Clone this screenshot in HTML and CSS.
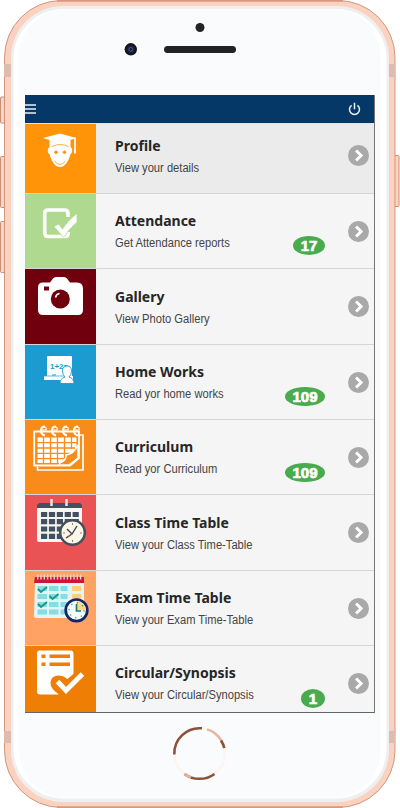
FILE: index.html
```
<!DOCTYPE html>
<html lang="en">
<head>
<meta charset="utf-8">
<title>School menu</title>
<link rel="stylesheet" href="styles.css">
</head>
<body>
<div class="device">
  <svg class="frame" viewBox="0 0 400 808" aria-hidden="true">
    <g fill="#fbd3c1" stroke="#c9917b">
      <rect x=".5" y="97" width="6" height="26" rx="1"/>
      <rect x=".5" y="156.500" width="6" height="51" rx="1"/>
      <rect x=".5" y="221.500" width="6" height="51" rx="1"/>
      <rect x="393" y="155.500" width="6" height="51" rx="1"/>
    </g>
    <rect x="4.500" y=".5" width="390.500" height="807" rx="57" fill="#fbd2c0" stroke="#cf967e"/>
    <path d="M57 .7H343M57 807.300H343" stroke="#d69a82" stroke-width="2"/>
    <path d="M4 64h8v13H4zM388 64h7v13h-7zM4 731h8v12H4zM388 731h7v12h-7z" fill="#dfbcae"/>
    <rect x="11" y="6" width="378" height="796" rx="52" fill="#eeeff0"/>
    <rect x="13.500" y="9" width="373" height="789.500" rx="50" fill="#fff"/>
    <rect x="19" y="9.500" width="361.500" height="788" rx="47" fill="#fafbfd"/>
    <circle cx="200" cy="27.500" r="4.500" fill="#222325"/>
    <rect x="164" y="46" width="72" height="7" rx="3.500" fill="#222325"/>
    <circle cx="130.800" cy="49.300" r="6.200" fill="#15151b"/>
    <circle cx="130.800" cy="49.300" r="3.600" fill="#172457"/>
    <circle cx="130.800" cy="49.300" r="1.800" fill="#15151b" stroke="#7280b0" stroke-width=".6"/>
    <g fill="none" stroke-width="2.500">
      <circle cx="199.500" cy="753.500" r="25.300" stroke="#fcf5f0"/>
      <path d="M174.300 754.500A25.300 25.300 0 0 1 202 728.300" stroke="#8b513b"/>
      <path d="M207 729.400A25.300 25.300 0 0 1 224.300 748" stroke="#e8b49f"/>
      <path d="M221 740.500A25.300 25.300 0 0 1 224.300 748" stroke="#8b513b"/>
      <path d="M184.500 773.900A25.300 25.300 0 0 0 214.500 773.900" stroke="#8b513b"/>
      <path d="M184.500 773.900A25.300 25.300 0 0 0 191 777.400" stroke="#e5af9a"/>
    </g>
  </svg>
  <main class="screen">
    <header class="bar">
      <svg width="11" height="12" viewBox="0 0 11 12"><path d="M0 2h11M0 6h11M0 10h11" stroke="#e9eff5" stroke-width="1.700"/></svg>
      <svg width="13" height="14" viewBox="0 0 13 14" fill="none" stroke="#e9eff5" stroke-width="1.500"><path d="M3.600 3.400a5 5 0 1 0 5.800 0M6.500.7v6.500"/></svg>
    </header>
    <ul class="menu">
      <li class="row first">
        <div class="tile orange"><svg viewBox="0 0 71 75">
          <path fill="#fff" d="M18 19L35 14.500L51 19L45.500 21V28Q35 24 24.500 28V21ZM24.500 28Q35 23.500 45.500 28C48 30 47.500 34 45.300 35.500C44 41.500 40 48 35 48S26 41.500 24.700 35.500C22.500 34 22 30 24.500 28Z"/>
          <circle cx="31" cy="33.300" r="1.700" fill="#ff9409"/><circle cx="39.500" cy="33.300" r="1.700" fill="#ff9409"/>
          <path d="M27 27.500Q35 23.500 43.500 27.500M29.500 42Q35 49 40.500 42" fill="none" stroke="#ffae45"/>
          <path d="M50 18.500v16" stroke="#fff" stroke-width="1.700"/>
        </svg></div>
        <div class="text"><h2>Profile</h2><p>View your details</p></div>
        <span class="arrow"><svg viewBox="0 0 20 20"><path d="M7.700 5.200l4.800 4.800-4.800 4.800"/></svg></span>
      </li>
      <li class="row">
        <div class="tile green"><svg viewBox="0 0 71 75">
          <path d="M43.300 38V39Q43.300 42.500 40 42.500H23Q19.700 42.500 19.700 39V19.500Q19.700 16 23 16H39.500Q43 16 43 19.500V23" fill="none" stroke="#fff" stroke-width="3.600"/>
          <path d="M29 32.500l4.500-2.500 4 5.200Q43 26 52 19.500V28Q43 36 38.500 43.500Z" fill="#fff" stroke="#afd98f" stroke-width=".7"/>
        </svg></div>
        <div class="text"><h2>Attendance</h2><p>Get Attendance reports</p></div>
        <span class="badge two">17</span>
        <span class="arrow"><svg viewBox="0 0 20 20"><path d="M7.700 5.200l4.800 4.800-4.800 4.800"/></svg></span>
      </li>
      <li class="row">
        <div class="tile maroon"><svg viewBox="0 0 71 75">
          <path d="M18 13.500h7l3-4Q29 8 31 8h8q2 0 3 1.500l3 4h7q6 0 6 6V41q0 5-5 5H18q-5 0-5-5V18.500q0-5 5-5Z" fill="#fff"/>
          <circle cx="35.300" cy="30" r="9.500" fill="#71000f"/><path d="M19 17.500h5v4h-5z" fill="#71000f"/><path d="M30.500 28.500a5 5 0 0 1 4-4" fill="none" stroke="#fff" stroke-width="1.600"/>
        </svg></div>
        <div class="text"><h2>Gallery</h2><p>View Photo Gallery</p></div>
        <span class="arrow"><svg viewBox="0 0 20 20"><path d="M7.700 5.200l4.800 4.800-4.800 4.800"/></svg></span>
      </li>
      <li class="row">
        <div class="tile blue"><svg viewBox="0 0 71 75">
          <path d="M23 11h23q1 0 1 1v19h1v4H19v-4h3V12q0-1 1-1Z" fill="#fff"/>
          <path d="M19 31h20" stroke="#1b9bcf" stroke-width=".7"/>
          <text x="25" y="23.500" font-family="Liberation Sans" font-size="8" font-weight="bold" fill="#1b9bcf">1+2=</text>
          <path d="M27 30h4" stroke="#1b9bcf"/>
          <path d="M35 38.500q0-5 5-6.500-2.500-2-2.500-6 0-5 4.500-5t4.500 5q0 4-2.500 6 5 1.500 5 6.500Z" fill="#fff" stroke="#1b9bcf" stroke-width=".9"/>
        </svg></div>
        <div class="text"><h2>Home Works</h2><p>Read yor home works</p></div>
        <span class="badge three">109</span>
        <span class="arrow"><svg viewBox="0 0 20 20"><path d="M7.700 5.200l4.800 4.800-4.800 4.800"/></svg></span>
      </li>
      <li class="row">
        <div class="tile amber"><svg viewBox="0 0 71 75">
          <path d="M54.500 15H58V50H12.500V47" fill="none" stroke="#fff" stroke-width="1.700"/>
          <path d="M9.200 11.500H54V38L45 45.500H9.200Z" fill="none" stroke="#fff" stroke-width="1.800"/>
          <path d="M12.500 17.500h39V30q-4 8-17 13h-22z" fill="#fff"/>
          <path d="M12 22.700h40M12 28h38M12 33.300h33M12 38.600h28M18.500 17v26M25.500 17v26M32.500 17v26M39.500 17v22M46.500 17v12" stroke="#f88b19" stroke-width="1.300"/>
          <path d="M35 43q7-3 6-8 8-1 12-10v13l-9 7H34Z" fill="#f88b19" stroke="#fff" stroke-width="1.500"/>
          <path d="M20 15q-4-1-4-5t4-4M31 15q-4-1-4-5t4-4M42 15q-4-1-4-5t4-4M53 15q-4-1-4-5t4-4" transform="translate(0 .5)" fill="none" stroke="#fff" stroke-width="2"/>
          <path d="M19 7q3 0 2 3h-4M30 7q3 0 2 3h-4M41 7q3 0 2 3h-4M52 7q3 0 2 3h-4" fill="none" stroke="#fff" stroke-width="1.200"/>
        </svg></div>
        <div class="text"><h2>Curriculum</h2><p>Read yor Curriculum</p></div>
        <span class="badge three">109</span>
        <span class="arrow"><svg viewBox="0 0 20 20"><path d="M7.700 5.200l4.800 4.800-4.800 4.800"/></svg></span>
      </li>
      <li class="row">
        <div class="tile red"><svg viewBox="0 0 71 75">
          <rect x="12" y="8" width="45" height="39" rx="2" fill="#f7f6f3"/>
          <path d="M12 13v-3q0-2 2-2h41q2 0 2 2v3z" fill="#42505f"/>
          <path d="M26.500 4v7M41.500 4v7" stroke="#e6e9ea" stroke-width="2.500"/>
          <path d="M16 19.500h38M16 26.700h38M16 34h38M16 41.300h23" fill="none" stroke="#42505f" stroke-width="5.200" stroke-dasharray="6.200 1.700"/>
          <circle cx="47.500" cy="37.500" r="12.300" fill="#fcf8e7" stroke="#42505f" stroke-width="2.500"/>
          <path d="M42 34l5 5 5-8M47 39l-6 4" fill="none" stroke="#344150" stroke-width="1.400"/><path d="M47 39l-4 3" stroke="#db3c42"/>
          <path d="M47.500 28v2M47.500 45v2M38 38h2M55 38h2" stroke="#7c8587"/>
        </svg></div>
        <div class="text"><h2>Class Time Table</h2><p>View your Class Time-Table</p></div>
        <span class="arrow"><svg viewBox="0 0 20 20"><path d="M7.700 5.200l4.800 4.800-4.800 4.800"/></svg></span>
      </li>
      <li class="row">
        <div class="tile peach"><svg viewBox="0 0 71 75">
          <path d="M10 11h49v34q0 2-2 2H11q-2 0-2-2Z" fill="#e3f4f4"/>
          <path d="M9 12l1-6h49v6z" fill="#cf1436"/>
          <path d="M12 6h46" stroke="#ead4db" stroke-width="5" stroke-dasharray="1.400 1.900"/>
          <path d="M12.500 17.500h30M12.500 25.500h30M12.500 33.500h30M12.500 41h30" stroke="#86dce5" stroke-width="5" stroke-dasharray="9.500 2"/>
          <path d="M47 17.500h9M47 25.500h9" stroke="#ffcf7e" stroke-width="5"/>
          <path d="M13 18l3 3 6-5M24.500 25l3 3 6-5M13 33l3 3 6-5" fill="none" stroke="#159a83" stroke-width="1.900"/>
          <circle cx="51.500" cy="39.300" r="10.800" fill="#f6fcfa" stroke="#102767" stroke-width="2.700"/>
          <path d="M51.500 30a9.300 9.300 0 0 1 9.300 9.300h-9.300z" fill="#ffd68c"/>
          <circle cx="51.500" cy="39.300" r="7.500" fill="none" stroke="#159a83" stroke-width="1.200" stroke-dasharray="1.300 4.600"/>
          <path d="M51.500 33v7H56" fill="none" stroke="#15806f" stroke-width="1.700"/>
        </svg></div>
        <div class="text"><h2>Exam Time Table</h2><p>View your Exam Time-Table</p></div>
        <span class="arrow"><svg viewBox="0 0 20 20"><path d="M7.700 5.200l4.800 4.800-4.800 4.800"/></svg></span>
      </li>
      <li class="row last">
        <div class="tile dark"><svg viewBox="0 0 71 75">
          <path d="M14.500 4.500h31q3 0 3 3V28l-6 5-5-3-10 6 3 7 3 5.500H15q-3 0-3-3V7q0-2.500 2.500-2.500Z" fill="#fff"/>
          <path d="M16.500 10.300h4M16.500 18.300h4M24.500 10.300H45M24.500 18.300H45" stroke="#ef7f04" stroke-width="3.600"/>
          <path d="M35 49Q25 43 25.500 36.500 26 29.500 34 29.500q4 0 6 2.500l2 2 7-6.500V37L37 49Z" fill="#ef7f04"/>
          <path d="M32.500 35.500l8.500 9L57.500 28" fill="none" stroke="#fff" stroke-width="5"/>
        </svg></div>
        <div class="text"><h2>Circular/Synopsis</h2><p>View your Circular/Synopsis</p></div>
        <span class="badge one">1</span>
        <span class="arrow"><svg viewBox="0 0 20 20"><path d="M7.700 5.200l4.800 4.800-4.800 4.800"/></svg></span>
      </li>
    </ul>
  </main>
</div>
</body>
</html>
```
FILE: styles.css
```
* { box-sizing: border-box; }
body { margin: 0; background: #fff; font-family: "Liberation Sans", sans-serif; }
.device { position: relative; width: 400px; height: 808px; padding: 95px 25px; overflow: hidden; }
.frame { position: absolute; inset: 0; width: 400px; height: 808px; }
.screen { position: relative; width: 350px; height: 618px; overflow: hidden; border-right: 1px solid #757575; border-bottom: 1px solid #656565; background: #f5f5f5; }
.bar { display: flex; justify-content: space-between; align-items: center; height: 29px; padding-right: 13px; background: #053867; border-bottom: 1px solid #e1e4e7; }
.menu { list-style: none; margin: 0; padding: 0; }
.row { position: relative; display: flex; height: 75.36px; border-bottom: 1px solid #d6d6d6; }
.first { height: 69.9px; background: #ebebeb; align-items: flex-end; overflow: hidden; }
.last { border-bottom: 0; }
.tile { flex: none; width: 71px; height: 74.36px; }
.tile svg { display: block; width: 71px; height: 75px; }
.orange { background: #ff9409; }
.green { background: #afd98f; }
.maroon { background: #71000f; }
.blue { background: #1b9bcf; }
.amber { background: #f88b19; }
.red { background: #e95354; }
.peach { background: #ffa264; }
.dark { background: #ef7f04; }
.text { flex: 1; height: 74.36px; padding: 17.4px 0 0 19px; white-space: nowrap; }
h2 { margin: 0; font: 700 14px/20px "Noto Sans", sans-serif; color: #262626; }
p { margin: 5px 0 0; font-size: 12px; line-height: 14px; color: #444; transform: scaleX(.93); transform-origin: left; }
.arrow { flex: none; width: 21px; height: 21px; margin: 27px 5.5px 0 0; border-radius: 50%; background: #a9a9a9; }
.first .arrow { align-self: flex-start; margin-top: 21.4px; }
.arrow svg { display: block; fill: none; stroke: #fff; stroke-width: 2.8; }
.badge { position: absolute; right: 49px; top: 42.6px; height: 19px; border-radius: 50%; background: #48ab4e; color: #fff; font: 700 15px/19px "Liberation Sans", sans-serif; -webkit-text-stroke: .7px #fff; text-align: center; }
.one { width: 24px; }
.two { width: 32px; }
.three { width: 40px; }
```
